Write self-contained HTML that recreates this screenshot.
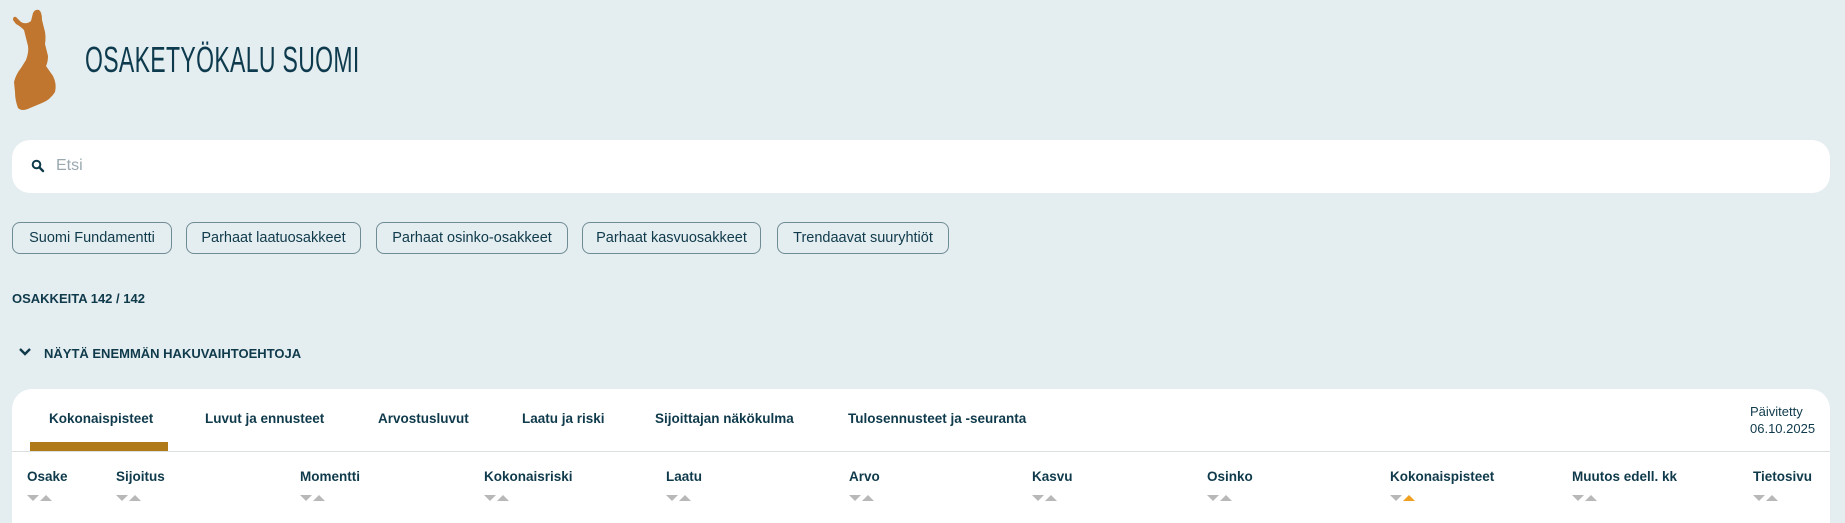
<!DOCTYPE html>
<html><head><meta charset="utf-8"><style>
*{margin:0;padding:0;box-sizing:border-box}
html,body{width:1845px;height:523px;overflow:hidden}
body{background:#e4edef;font-family:"Liberation Sans",sans-serif;color:#0f3a4b;position:relative}
.a{position:absolute;white-space:nowrap}
.title{left:85px;top:40px;font-size:36px;line-height:40px;transform:scaleX(0.64);transform-origin:left;color:#0e3a4e;letter-spacing:0.5px}
.search{left:12px;top:140px;width:1818px;height:53px;background:#fff;border-radius:18px}
.btn{top:222px;height:32px;border:1px solid #6f8c94;border-radius:8px;font-size:14.5px;line-height:30px;text-align:center;color:#0f3a4b}
.card{left:12px;top:389px;width:1818px;height:134px;background:#fff;border-radius:20px 20px 0 0}
.tab{top:411px;font-size:13.5px;font-weight:bold;color:#0f3a4b}
.col{top:469px;font-size:13.5px;font-weight:bold;color:#0f3a4b}
.ar{top:495px;width:26px;height:8px}
</style></head><body>
<svg class="a" style="left:10px;top:8px" width="50" height="104" viewBox="0 0 50 104"><path d="M3 12 Q3 8 6 9 L11 14 Q16 17 21 13 L23 5 Q25 1 29 2 Q32 4 32 12 L35 24 Q36 30 35 36 L38 48 Q38 54 36 58 L43 68 Q47 76 45 84 Q40 92 32 95 L20 100 Q12 104 8 100 Q5 92 5 84 L4 74 Q6 66 11 60 L16 52 Q19 44 18 38 L16 30 L14 22 Q10 18 6 16 Z" fill="#c0762e"/></svg>
<div class="a title">OSAKETYÖKALU SUOMI</div>
<div class="a search"></div>
<svg class="a" style="left:31px;top:159px" width="14" height="14" viewBox="0 0 14 14"><circle cx="5.5" cy="5.5" r="3.8" fill="none" stroke="#0f3a4b" stroke-width="2"/><path d="M8.3 8.3 L12 12" stroke="#0f3a4b" stroke-width="2.4" stroke-linecap="round"/></svg>
<div class="a" style="left:56px;top:157px;font-size:16px;color:#9aa9b0">Etsi</div>
<div class="a btn" style="left:12px;width:160px">Suomi Fundamentti</div>
<div class="a btn" style="left:186px;width:175px">Parhaat laatuosakkeet</div>
<div class="a btn" style="left:376px;width:192px">Parhaat osinko-osakkeet</div>
<div class="a btn" style="left:582px;width:179px">Parhaat kasvuosakkeet</div>
<div class="a btn" style="left:777px;width:172px">Trendaavat suuryhtiöt</div>
<div class="a" style="left:12px;top:291px;font-size:13px;font-weight:bold;color:#0f3a4b">OSAKKEITA 142 / 142</div>
<svg class="a" style="left:18px;top:347px" width="14" height="10" viewBox="0 0 14 10"><path d="M2 2 L7 7 L12 2" fill="none" stroke="#0f3a4b" stroke-width="2.4"/></svg>
<div class="a" style="left:44px;top:346px;font-size:13px;font-weight:bold;color:#0f3a4b">NÄYTÄ ENEMMÄN HAKUVAIHTOEHTOJA</div>
<div class="a card"></div>
<div class="a tab" style="left:49px">Kokonaispisteet</div>
<div class="a tab" style="left:205px">Luvut ja ennusteet</div>
<div class="a tab" style="left:378px">Arvostusluvut</div>
<div class="a tab" style="left:522px">Laatu ja riski</div>
<div class="a tab" style="left:655px">Sijoittajan näkökulma</div>
<div class="a tab" style="left:848px">Tulosennusteet ja -seuranta</div>
<div class="a" style="left:1750px;top:403px;font-size:13px;line-height:17px;color:#0f3a4b">Päivitetty<br>06.10.2025</div>
<div class="a" style="left:30px;top:442px;width:138px;height:9px;background:#b07a1a"></div>
<div class="a" style="left:12px;top:451px;width:1818px;height:1px;background:#dcdfe0"></div>
<div class="a col" style="left:27px">Osake</div>
<div class="a col" style="left:116px">Sijoitus</div>
<div class="a col" style="left:300px">Momentti</div>
<div class="a col" style="left:484px">Kokonaisriski</div>
<div class="a col" style="left:666px">Laatu</div>
<div class="a col" style="left:849px">Arvo</div>
<div class="a col" style="left:1032px">Kasvu</div>
<div class="a col" style="left:1207px">Osinko</div>
<div class="a col" style="left:1390px">Kokonaispisteet</div>
<div class="a col" style="left:1572px">Muutos edell. kk</div>
<div class="a col" style="left:1753px">Tietosivu</div>
<svg width="0" height="0" style="position:absolute"><defs><g id="ar"><path d="M0 0 H12 L6 6 Z" fill="#b8b8b8"/><path d="M13 6 L19 0 L25 6 Z" fill="#b8b8b8"/></g></defs></svg>
<svg class="a ar" style="left:27px"><use href="#ar"/></svg>
<svg class="a ar" style="left:116px"><use href="#ar"/></svg>
<svg class="a ar" style="left:300px"><use href="#ar"/></svg>
<svg class="a ar" style="left:484px"><use href="#ar"/></svg>
<svg class="a ar" style="left:666px"><use href="#ar"/></svg>
<svg class="a ar" style="left:849px"><use href="#ar"/></svg>
<svg class="a ar" style="left:1032px"><use href="#ar"/></svg>
<svg class="a ar" style="left:1207px"><use href="#ar"/></svg>
<svg class="a ar" style="left:1390px"><path d="M0 0 H12 L6 6 Z" fill="#b8b8b8"/><path d="M13 6 L19 0 L25 6 Z" fill="#f0a020"/></svg>
<svg class="a ar" style="left:1572px"><use href="#ar"/></svg>
<svg class="a ar" style="left:1753px"><use href="#ar"/></svg>
</body></html>
